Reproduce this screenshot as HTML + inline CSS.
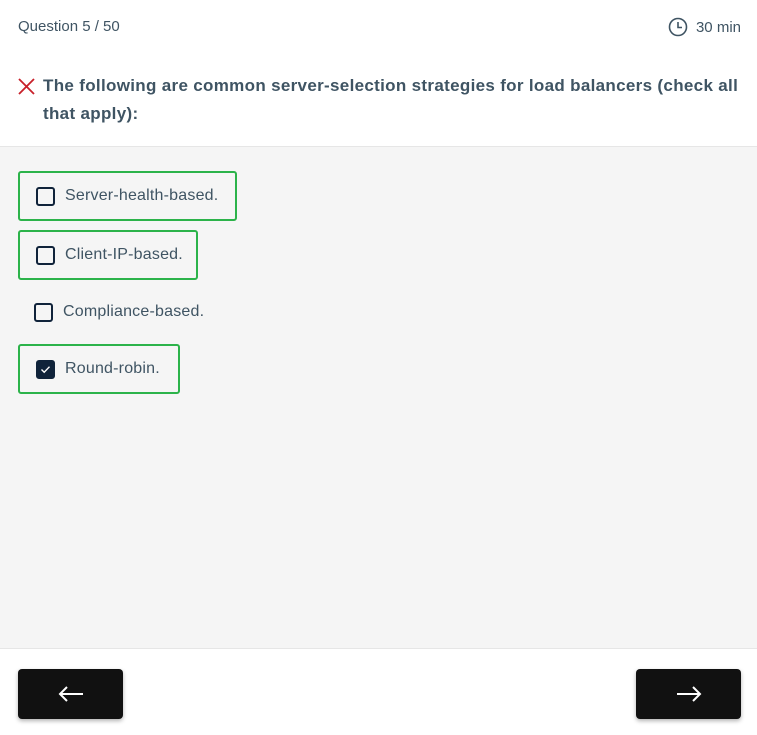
<!DOCTYPE html>
<html><head><style>
body{margin:0;width:757px;height:735px;font-family:"Liberation Sans",sans-serif;color:#3f5463;background:#fff;position:relative;overflow:hidden}
.hdr{position:absolute;left:0;top:0;width:757px;height:146px;background:#fff;border-bottom:1px solid #e6e6e6}
.main{position:absolute;left:0;top:147px;width:757px;height:501px;background:#f5f5f5;border-bottom:1px solid #e6e6e6}
.q{position:absolute;left:18px;top:18px;font-size:15px}
.t{position:absolute;right:16px;top:17px;font-size:15px;display:flex;align-items:center;gap:8px}
.title{position:absolute;left:43px;top:72px;width:704px;font-size:17px;font-weight:bold;line-height:28px;color:#3f5463;letter-spacing:.32px}
.x{position:absolute;left:18px;top:78px}
.opt{position:absolute;left:18px;border:2px solid #2cb34a;border-radius:3px;box-sizing:border-box;height:50px;display:flex;align-items:center;font-size:16px;letter-spacing:.2px}
.cb{width:15px;height:15px;border:2px solid #10233a;border-radius:3px;margin:0 10px 0 16px;display:inline-block;box-sizing:content-box}
.btn{position:absolute;top:669px;width:105px;height:50px;background:#111;border-radius:4px;box-shadow:0 2px 4px rgba(0,0,0,.3);display:flex;align-items:center;justify-content:center}
</style></head><body>
<div class="hdr">
<div class="q">Question 5 / 50</div>
<div class="t"><svg width="20" height="20" viewBox="0 0 20 20"><circle cx="10" cy="10" r="8.5" fill="none" stroke="#3f5463" stroke-width="1.6"/><path d="M10 5v5.5h4" fill="none" stroke="#3f5463" stroke-width="1.6"/></svg>30 min</div>
<svg class="x" width="17" height="17" viewBox="0 0 17 17"><path d="M1 1L16 16M16 1L1 16" stroke="#c8202a" stroke-width="1.8"/></svg>
<div class="title">The following are common server-selection strategies for load balancers (check all that apply):</div>
</div>
<div class="main">
<div class="opt" style="top:24px;width:219px"><span class="cb"></span>Server-health-based.</div>
<div class="opt" style="top:83px;width:180px"><span class="cb"></span>Client-IP-based.</div>
<div class="opt" style="top:140px;width:220px;border-color:transparent"><span class="cb" style="margin-left:14px;margin-right:10px"></span>Compliance-based.</div>
<div class="opt" style="top:197px;width:162px"><span class="cb" style="background:#10233a;position:relative"><svg width="15" height="15" viewBox="0 0 15 15" style="position:absolute;left:0;top:0"><path d="M3.5 7.5l2.7 2.7 5.3-5.5" fill="none" stroke="#fff" stroke-width="1.4"/></svg></span>Round-robin.</div>
</div>
<div class="btn" style="left:18px"><svg width="26" height="18" viewBox="0 0 26 18"><path d="M25 9H2M9 2L2 9l7 7" fill="none" stroke="#fff" stroke-width="2"/></svg></div>
<div class="btn" style="left:636px"><svg width="26" height="18" viewBox="0 0 26 18"><path d="M1 9h23M17 2l7 7-7 7" fill="none" stroke="#fff" stroke-width="2"/></svg></div>
</body></html>
